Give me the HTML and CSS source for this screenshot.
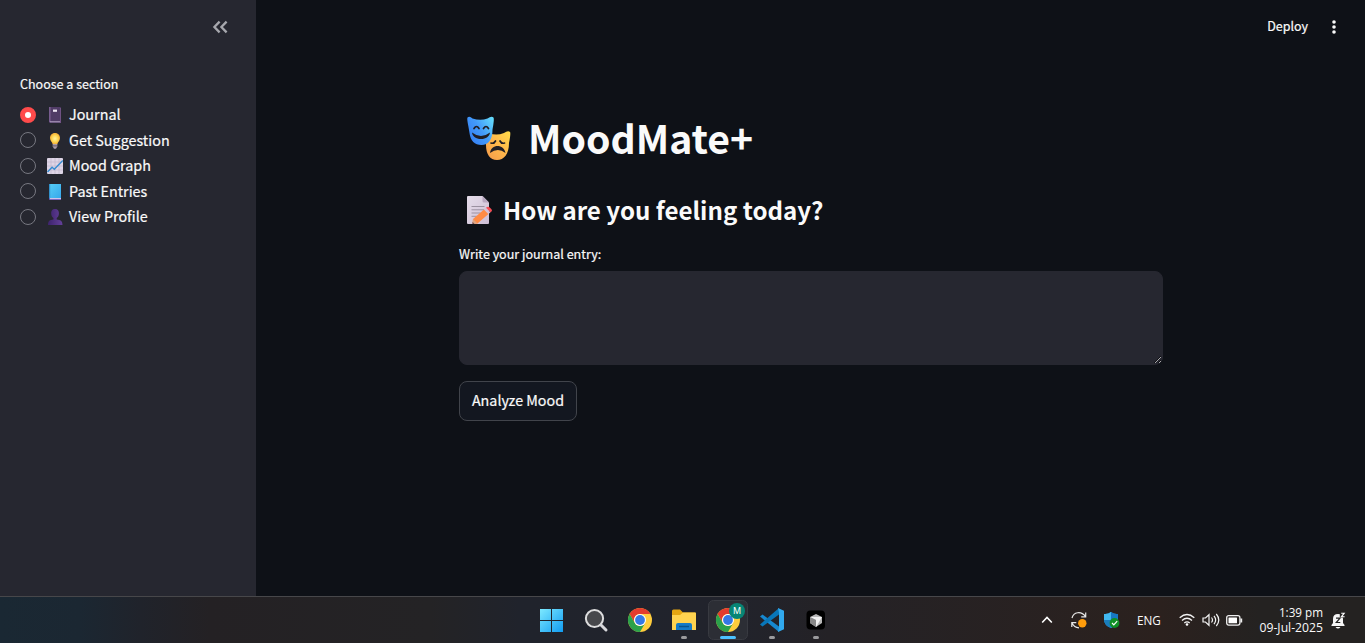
FILE: index.html
```html
<!DOCTYPE html>
<html lang="en">
<head>
<meta charset="utf-8">
<title>MoodMate+</title>
<link rel="stylesheet" href="styles.css">
</head>
<body>
<div class="screen">
  <div class="app">
    <aside class="sidebar">
      <button class="collapse" aria-label="Collapse sidebar"><svg width="16" height="14" viewBox="0 0 16 14"><path d="M7.600 1.600 2.400 7l5.200 5.400M14.600 1.600 9.400 7l5.200 5.400" fill="none" stroke="#a6a7ad" stroke-width="2.300"/></svg></button>
      <div class="group-label">Choose a section</div>
      <label class="option"><span class="radio checked"></span>
        <svg class="emoji" viewBox="0 0 16 16"><path d="M2 0h11.2q.8 0 .8.8V16H2.8Q2 16 2 15z" fill="#503c66"/><path d="M2 0h1.6v15H2z" fill="#775c8e"/><path d="M3 14.3h10.3v1H3z" fill="#b6a4c6"/><path d="M13 1h1v15h-1z" fill="#705284"/><path d="M6 2.6h4v2.2H6z" fill="#eee5f3"/></svg><span class="option-text">Journal</span></label>
      <label class="option"><span class="radio"></span>
        <svg class="emoji" viewBox="0 0 16 16"><defs><radialGradient id="bulb"><stop stop-color="#fff1a4"/><stop offset=".55" stop-color="#ffda56"/><stop offset="1" stop-color="#f3ad35"/></radialGradient></defs><path d="M8 0C4.700 0 3 2.500 3 5c0 3 2 3.500 2.700 6.300h4.600C11 8.500 13 8 13 5c0-2.500-1.700-5-5-5z" fill="url(#bulb)"/><path d="M5.700 11h4.600v2.400L9 15.800H7l-1.300-2.400z" fill="#a99aa7"/><path d="M6 12.900h4" stroke="#625463"/></svg><span class="option-text">Get Suggestion</span></label>
      <label class="option"><span class="radio"></span>
        <svg class="emoji" viewBox="0 0 16 16"><rect width="16" height="16" rx="1" fill="#ded5e6"/><path d="M4 0v16M8 0v16M12 0v16M0 4h16M0 8h16M0 12h16" stroke="#beb4c9" stroke-width=".6"/><path d="m.5 14 4.600-4.700 2.200 2L15.800 2.500" fill="none" stroke="#358bd0" stroke-width="1.400"/></svg><span class="option-text">Mood Graph</span></label>
      <label class="option"><span class="radio"></span>
        <svg class="emoji" viewBox="0 0 16 16"><defs><linearGradient id="book" x2="1" y2="1"><stop stop-color="#57cef7"/><stop offset="1" stop-color="#36a7eb"/></linearGradient></defs><path d="M2 0h12v14H2z" fill="url(#book)"/><path d="M2 0h1.200v15H2z" fill="#3292cb"/><path d="M2.500 14H14v2H3q-1 0-1-1z" fill="#735dbb"/><path d="M3 14.100h11v1H3z" fill="#d8d1ef"/></svg><span class="option-text">Past Entries</span></label>
      <label class="option"><span class="radio"></span>
        <svg class="emoji" viewBox="0 0 16 16"><defs><linearGradient id="user" x2="1"><stop stop-color="#3d236c"/><stop offset="1" stop-color="#64409a"/></linearGradient></defs><path d="M8 0C5 0 3.800 2 4.200 5c.2 2 1 3.200 2.200 4v1.500C2.800 10.800 1 12 1 16h14.500c0-4-2-5.200-5.800-5.500V9c1.200-.8 2-2 2.200-4C12.200 2 11 0 8 0z" fill="url(#user)"/></svg><span class="option-text">View Profile</span></label>
    </aside>
    <main class="main">
      <header class="toolbar"><span class="deploy">Deploy</span><svg width="6" height="16" viewBox="0 0 6 16"><g fill="#fafafa"><circle cx="3" cy="3" r="1.800"/><circle cx="3" cy="8" r="1.800"/><circle cx="3" cy="13" r="1.800"/></g></svg></header>
      <section class="content">
        <h1 class="title">
          <svg class="masks" viewBox="0 0 46 46"><defs><linearGradient id="happy" y1=".8" x2="1" y2=".1"><stop stop-color="#337df3"/><stop offset=".5" stop-color="#439afa"/><stop offset="1" stop-color="#64dcfb"/></linearGradient><linearGradient id="sad" y1="1" x2="1" y2="0"><stop stop-color="#f2984b"/><stop offset=".5" stop-color="#ffb64b"/><stop offset="1" stop-color="#ffdc49"/></linearGradient></defs>
          <path d="M19 18q2-2 4 0 7 3 15 0 4-3 6-1 1 1-1 11c0 11-5 17-12 17S20 39 20 30z" fill="url(#sad)"/><g transform="translate(.5 1)"><path d="M1 1.500q2-2 5 1 8 2.500 15 0 4-3 6-1 1 1-1 12c0 10-4 15.500-11 15.500S4 25 3 17C2.500 12 0 3 1 1.500z" fill="url(#happy)"/><path d="M7.500 12.500q2.500-4 5 0M17 12.500q2.500-4 5 0" fill="none" stroke="#211e24" stroke-width="1.700" stroke-linecap="round"/><path d="M5.500 16.500q9 7 18 0c-.5 4-4 6.500-9 6.500s-8.500-2.500-9-6.500z" fill="#211e24"/></g><path d="M25 28q3 1 4.500-2M34 26q1.500 3 4.500 2" fill="none" stroke="#211e24" stroke-width="1.700" stroke-linecap="round"/><path d="M24 38C25 28.500 38 28.500 39.500 38q-7.500-6-15.500 0z" fill="#211e24"/></svg><span class="title-text">MoodMate+</span></h1>
        <h2 class="subtitle">
          <svg class="memo" viewBox="0 0 27 28"><defs><linearGradient id="page" x2="1" y2="1"><stop stop-color="#e5ddea"/><stop offset="1" stop-color="#cebed5"/></linearGradient></defs><path d="M2 0h14.500L23 6.500V27q0 1-1 1H2q-1 0-1-1V1q0-1 1-1z" fill="url(#page)"/><path d="M16.500 0v5q0 1.500 1.500 1.500h5z" fill="#b7a7c0"/><path d="M5.500 10.500h13M5.500 13.800h13M5.500 17h9M5.500 20.300h6" stroke="#9b91a1"/><path d="m7 23 11-9.500 4.500 4.500-11 9.500L6.500 28z" fill="#ff8b45"/><path d="m7 23 4.500 4.500-5 .5z" fill="#dfa582"/><path d="m6.500 26 2 1.700-2 .3z" fill="#574251"/><path d="m18 13.500 2-1.800 4.500 4.500-2 1.800z" fill="#d7c1d4"/><path d="m20 11.700 1-.8q1.500-.8 3 .8l1.500 1.500q1 1.500 0 2.200l-1 .8z" fill="#f64e56"/></svg><span class="subtitle-text">How are you feeling today?</span></h2>
        <label class="field-label" for="entry">Write your journal entry:</label>
        <textarea class="entry" id="entry"></textarea>
        <button class="analyze"><span class="analyze-text">Analyze Mood</span></button>
      </section>
    </main>
  </div>
  <footer class="taskbar">
    <nav class="apps">
      <span class="task"><svg viewBox="0 0 44 46"><defs><linearGradient id="win" x2="1" y2="1"><stop stop-color="#7de9ff"/><stop offset="1" stop-color="#119cf2"/></linearGradient></defs><path d="M10 12h11v11H10zM22 12h11v11H22zM10 24h11v11H10zM22 24h11v11H22z" fill="url(#win)"/></svg></span>
      <span class="task"><svg viewBox="0 0 44 46"><circle cx="20.500" cy="21.500" r="8.600" fill="#47484c" stroke="#ddddde" stroke-width="2"/><path d="m27 28 5 5" stroke="#d7d7db" stroke-width="3" stroke-linecap="round"/></svg></span>
      <span class="task"><svg viewBox="0 0 44 46"><g id="chrome"><circle cx="22" cy="23" r="12" fill="#ffcd3d"/><path d="M11.600 17A12 12 0 0 1 32.400 17H22a6 6 0 0 0-5.200 9z" fill="#e33b2e"/><path d="M11.600 17A12 12 0 0 0 22 35l5.200-9a6 6 0 0 1-10.400 0z" fill="#2ba14b"/><circle cx="22" cy="23" r="6" fill="#fff"/><circle cx="22" cy="23" r="4.900" fill="#3478e5"/></g></svg></span>
      <span class="task"><svg viewBox="0 0 44 46"><path d="M10 14q0-1.500 1.500-1.500H18l3 3h12q1 0 1 1V33H10z" fill="#e5a611"/><path d="M10 18h8l3-2.500h12q1 0 1 1V33H10z" fill="#ffd34f"/><path d="M14 33v-5q0-2 2-2h12q2 0 2 2v5z" fill="#147ac7"/><path d="M17 29.500h10" stroke="#07548e" stroke-width="1.500"/><rect x="19" y="39" width="6" height="3" rx="1.500" fill="#9a9a9d"/></svg></span>
      <span class="task"><svg viewBox="0 0 44 46"><rect x=".5" y="3.500" width="39" height="39" rx="5" transform="translate(2)" fill="#2c2e35" stroke="#383a41"/><use href="#chrome"/><circle cx="31" cy="14" r="8" fill="#078575"/><text x="31" y="17.300" class="badge">M</text><rect x="14" y="39" width="16" height="3" rx="1.500" fill="#4cc2ff"/></svg></span>
      <span class="task"><svg viewBox="0 0 44 46"><path d="m10 19.500 2.500-2L29 29.500V35z" fill="#1688d0"/><path d="m10 27.500 2.500 2L29 17.500V11z" fill="#0876b9"/><path d="m28 11 6 2.700v18.600L28 35l1-4.500v-15z" fill="#31a9ee"/><rect x="19" y="39" width="6" height="3" rx="1.500" fill="#9a9a9d"/></svg></span>
      <span class="task"><svg viewBox="0 0 44 46"><rect x="12.500" y="13.500" width="18.500" height="19" rx="4" fill="#000"/><path d="m22 17 6 3v6l-6 4-6-4v-6z" fill="#b7b7b7"/><path d="m16 20 12 0-6 10V23z" fill="#f1f1f1"/><path d="m16 20 6 3v7l-6-4z" fill="#888"/><rect x="19" y="39" width="6" height="3" rx="1.500" fill="#9a9a9d"/></svg></span>
    </nav>
    <div class="tray">
      <svg class="up" viewBox="0 0 12 8"><path d="m1.200 6.500 4.800-5 4.800 5" fill="none" stroke="#fff" stroke-width="1.600"/></svg>
      <svg class="sync" viewBox="0 0 18 18"><g fill="none" stroke="#e7e7e7" stroke-width="1.200"><path d="M2 7C3.500 1 11-.5 15.500 5.500M15.700 1.500v4.300h-4.500M1.800 16v-4.300h4.500M2 12q2 4.500 7 4.800"/></g><circle cx="12.300" cy="12.300" r="4.200" fill="#ff9c0b"/></svg>
      <svg class="shield" viewBox="0 0 18 18"><path d="M8 1q3 2.500 7 2v6q0 5-7 8-7-3-7-8V3q4 .5 7-2z" fill="#269de0"/><path d="M1 3q4 .5 7-2v8H1z" fill="#41b8f0"/><path d="M8 1q3 2.500 7 2v6H8z" fill="#1678c4"/><path d="M8 9v8Q1 14 1 9z" fill="#1a7dbc"/><circle cx="11.500" cy="12" r="4.900" fill="#109025"/><path d="m9 12 1.800 1.800 3.400-3.600" fill="none" stroke="#fff" stroke-width="1.200"/></svg>
      <span class="lang">ENG</span>
      <svg class="wifi" viewBox="0 0 16 14"><g fill="none" stroke="#f3f3f3" stroke-width="1.300"><path d="M.7 4.800q7.300-6.600 14.600 0M3 7.500q5-4.500 10 0M5.300 10q2.700-2.300 5.400 0"/></g><circle cx="8" cy="11.500" r="1.300" fill="#fff"/></svg>
      <svg class="sound" viewBox="0 0 18 14"><g fill="none" stroke="#f3f3f3" stroke-width="1.200"><path d="M1 5h2.500L7 1.700v10.600L3.500 9H1zM9.500 4.500q2 2.500 0 5M12 2.800q3.300 4.200 0 8.400M14.300 1q5 6 0 12"/></g></svg>
      <svg class="battery" viewBox="0 0 17 11"><rect x=".7" y=".7" width="13.200" height="9.400" rx="2" fill="none" stroke="#eee" stroke-width="1.300"/><rect x="2.500" y="2.500" width="8.500" height="5.800" rx=".5" fill="#fff"/><path d="M15.300 3.500v4" stroke="#eee" stroke-width="1.800"/></svg>
      <div class="clock"><span class="time">1:39 pm</span><span>09-Jul-2025</span></div>
      <svg class="bell" viewBox="0 0 15 17"><path d="M2 11V7q0-5 5-5t5 5v4l1.500 2v1H.5v-1z" fill="#f5f5f5"/><path d="M4.500 15h5q-2.500 3-5 0z" fill="#fff"/><path d="M8.800 0H15v5.500H8.800z" fill="#252323"/><path d="M5 6.200h4L5.300 10.500h4" fill="none" stroke="#222" stroke-width="1.200"/><path d="M10.200 1.200h3L10.400 4.800h3.200" fill="none" stroke="#fff" stroke-width="1.100"/></svg>
    </div>
  </footer>
</div>
</body>
</html>
```
FILE: styles.css
```css
* { box-sizing: border-box; }
body { margin: 0; overflow: hidden; background: #0e1117; color: #fafafa; font-family: "Noto Sans CJK SC", sans-serif; }
button { font: inherit; color: inherit; }
svg { display: block; flex: none; }
.screen { width: 1365px; height: 643px; display: flex; flex-direction: column; }
.app { height: 596px; display: flex; }
.sidebar { width: 256px; padding: 20px 20px 0; background: #262730; flex: none; }
.collapse { display: block; margin: 0 8px 0 auto; border: 0; padding: 0; background: none; width: 16px; height: 14px; }
.group-label, .option-text, .deploy, .field-label, .analyze-text { -webkit-text-stroke: .2px currentColor; }
.group-label { margin-top: 40px; height: 20px; line-height: 20px; font-size: 12.500px; margin-bottom: 8.250px; white-space: nowrap; }
.option { display: flex; align-items: center; height: 25.500px; }
.radio { width: 16px; height: 16px; margin-bottom: .5px; border-radius: 50%; border: 1px solid #777881; flex: none; }
.radio.checked { border: 5px solid #ff4b4b; background: #fff; }
.emoji { width: 16px; height: 16px; margin: 0 6px 0 11px; }
.option-text { font-size: 14.350px; line-height: 24px; padding-bottom: 2px; white-space: nowrap; }
.main { flex: 1; }
.toolbar { height: 54px; display: flex; justify-content: flex-end; align-items: center; gap: 23px; padding-right: 28px; }
.deploy { font-size: 12.500px; line-height: 20px; padding-bottom: 2px; }
.content { width: 704px; margin-left: 203px; padding-top: 57px; }
.title { display: flex; align-items: center; margin: 0; height: 54px; font-weight: 700; font-size: 39.200px; line-height: 54px; }
.masks { width: 46px; height: 46px; margin: 0 16px 0 7px; }
.title-text, .subtitle-text { white-space: nowrap; }
.title-text { padding-bottom: 3px; }
.subtitle { display: flex; align-items: center; margin: 27px 0 0; height: 35px; font-weight: 600; font-size: 24.100px; line-height: 35px; }
.memo { width: 27px; height: 28px; margin: 0 10px 0 7px; }
.field-label { display: block; margin-top: 17px; height: 20px; line-height: 20px; font-size: 12.550px; }
.entry { display: block; width: 704px; height: 94px; margin: 7px 0 16px; background: #262730; border: 1px solid #262730; border-radius: 8px; resize: vertical; color: #fafafa; color-scheme: dark; outline: 0; }
.analyze { display: block; width: 118px; height: 40px; padding: 0 0 2px; font-size: 14.300px; line-height: 24px; border: 1px solid #41444b; border-radius: 8px; background: #131720; white-space: nowrap; }
.taskbar { height: 47px; border-top: 1px solid #47474a; display: flex; background: linear-gradient(90deg, #1a2833 0, #1b2732 80px, #20232b 140px, #242124 210px, #242325 430px, #20232c 520px, #21232c 720px, #242226 830px, #2b211e 1160px, #242221 1260px, #242221 100%); }
.apps { display: flex; margin-left: 530px; }
.task, .task svg { width: 44px; height: 46px; }
.badge { font: 9px "Noto Sans", sans-serif; fill: #fff; text-anchor: middle; }
.tray { display: flex; align-items: center; margin-left: 203px; font-family: "Open Sans", sans-serif; font-size: 11.700px; }
.up { width: 12px; height: 8px; }
.sync { width: 18px; height: 18px; margin-left: 17px; }
.shield { width: 18px; height: 18px; margin-left: 15px; }
.lang { width: 24px; margin-left: 16px; white-space: nowrap; }
.wifi { width: 16px; height: 14px; margin-left: 18px; }
.sound { width: 18px; height: 14px; margin-left: 7px; }
.battery { width: 17px; height: 11px; margin-left: 6px; }
.clock { display: flex; flex-direction: column; align-items: flex-end; width: 80px; font-size: 12.200px; line-height: 16px; white-space: nowrap; }
.time { font-size: 11.700px; }
.bell { width: 15px; height: 17px; margin-left: 8px; }
```
